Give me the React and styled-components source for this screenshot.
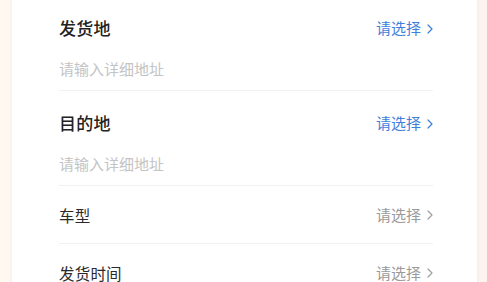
import React from "react";
import styled, { createGlobalStyle } from "styled-components";

const Global = createGlobalStyle`
  html, body { margin: 0; padding: 0; }
  body {
    font-family: "Noto Sans CJK SC", "Noto Sans", sans-serif;
    background: linear-gradient(90deg, #fef8f1 0%, #fdf6f2 100%);
    overflow: hidden;
  }
`;

const Page = styled.div`
  height: 282px;
  overflow: hidden;
  padding: 0 10px 0 12px;
  background: linear-gradient(90deg, #fef8f1 0%, #fdf4f0 100%);
`;

const Card = styled.div`
  margin-top: -4px;
  background: #ffffff;
  box-shadow: 0 0 3px rgba(240, 220, 205, 0.6);
  padding: 0 44px 0 47px;
  min-height: 320px;
`;

const Section = styled.div`
  border-bottom: 1px solid #f1f1f1;
  padding-bottom: ${(p) => (p.$address ? "12px" : "0")};
`;

const Row = styled.div`
  height: ${(p) => (p.$address ? "64px" : "57px")};
  display: flex;
  align-items: center;
  justify-content: space-between;
`;

const Label = styled.div`
  font-size: ${(p) => (p.$strong ? "17px" : "15.5px")};
  font-weight: ${(p) => (p.$strong ? 500 : 400)};
  color: ${(p) => (p.$strong ? "#222222" : "#2a2a2a")};
  letter-spacing: 0.2px;
  line-height: 20px;
`;

const Picker = styled.div`
  display: flex;
  align-items: center;
  gap: 6px;
  font-size: 15px;
  line-height: 20px;
  color: ${(p) => (p.$active ? "#3f7fdb" : "#9a9a9a")};
`;

const Placeholder = styled.div`
  height: 18px;
  line-height: 18px;
  font-size: 15px;
  color: #c4c4c4;
`;

const Chevron = ({ color }) => (
  <svg width="6" height="10" viewBox="0 0 6 10" fill="none" style={{ marginTop: 1 }}>
    <path d="M1 1l4 4-4 4" stroke={color} strokeWidth="1.2" strokeLinecap="round" strokeLinejoin="round" />
  </svg>
);

const AddressField = ({ label }) => (
  <Section $address>
    <Row $address>
      <Label $strong>{label}</Label>
      <Picker $active>
        请选择 <Chevron color="#3f7fdb" />
      </Picker>
    </Row>
    <Placeholder>请输入详细地址</Placeholder>
  </Section>
);

const SelectField = ({ label }) => (
  <Section>
    <Row>
      <Label>{label}</Label>
      <Picker>
        请选择 <Chevron color="#a0a0a0" />
      </Picker>
    </Row>
  </Section>
);

export default function App() {
  return (
    <>
      <Global />
      <Page>
        <Card>
          <AddressField label="发货地" />
          <AddressField label="目的地" />
          <SelectField label="车型" />
          <SelectField label="发货时间" />
        </Card>
      </Page>
    </>
  );
}
